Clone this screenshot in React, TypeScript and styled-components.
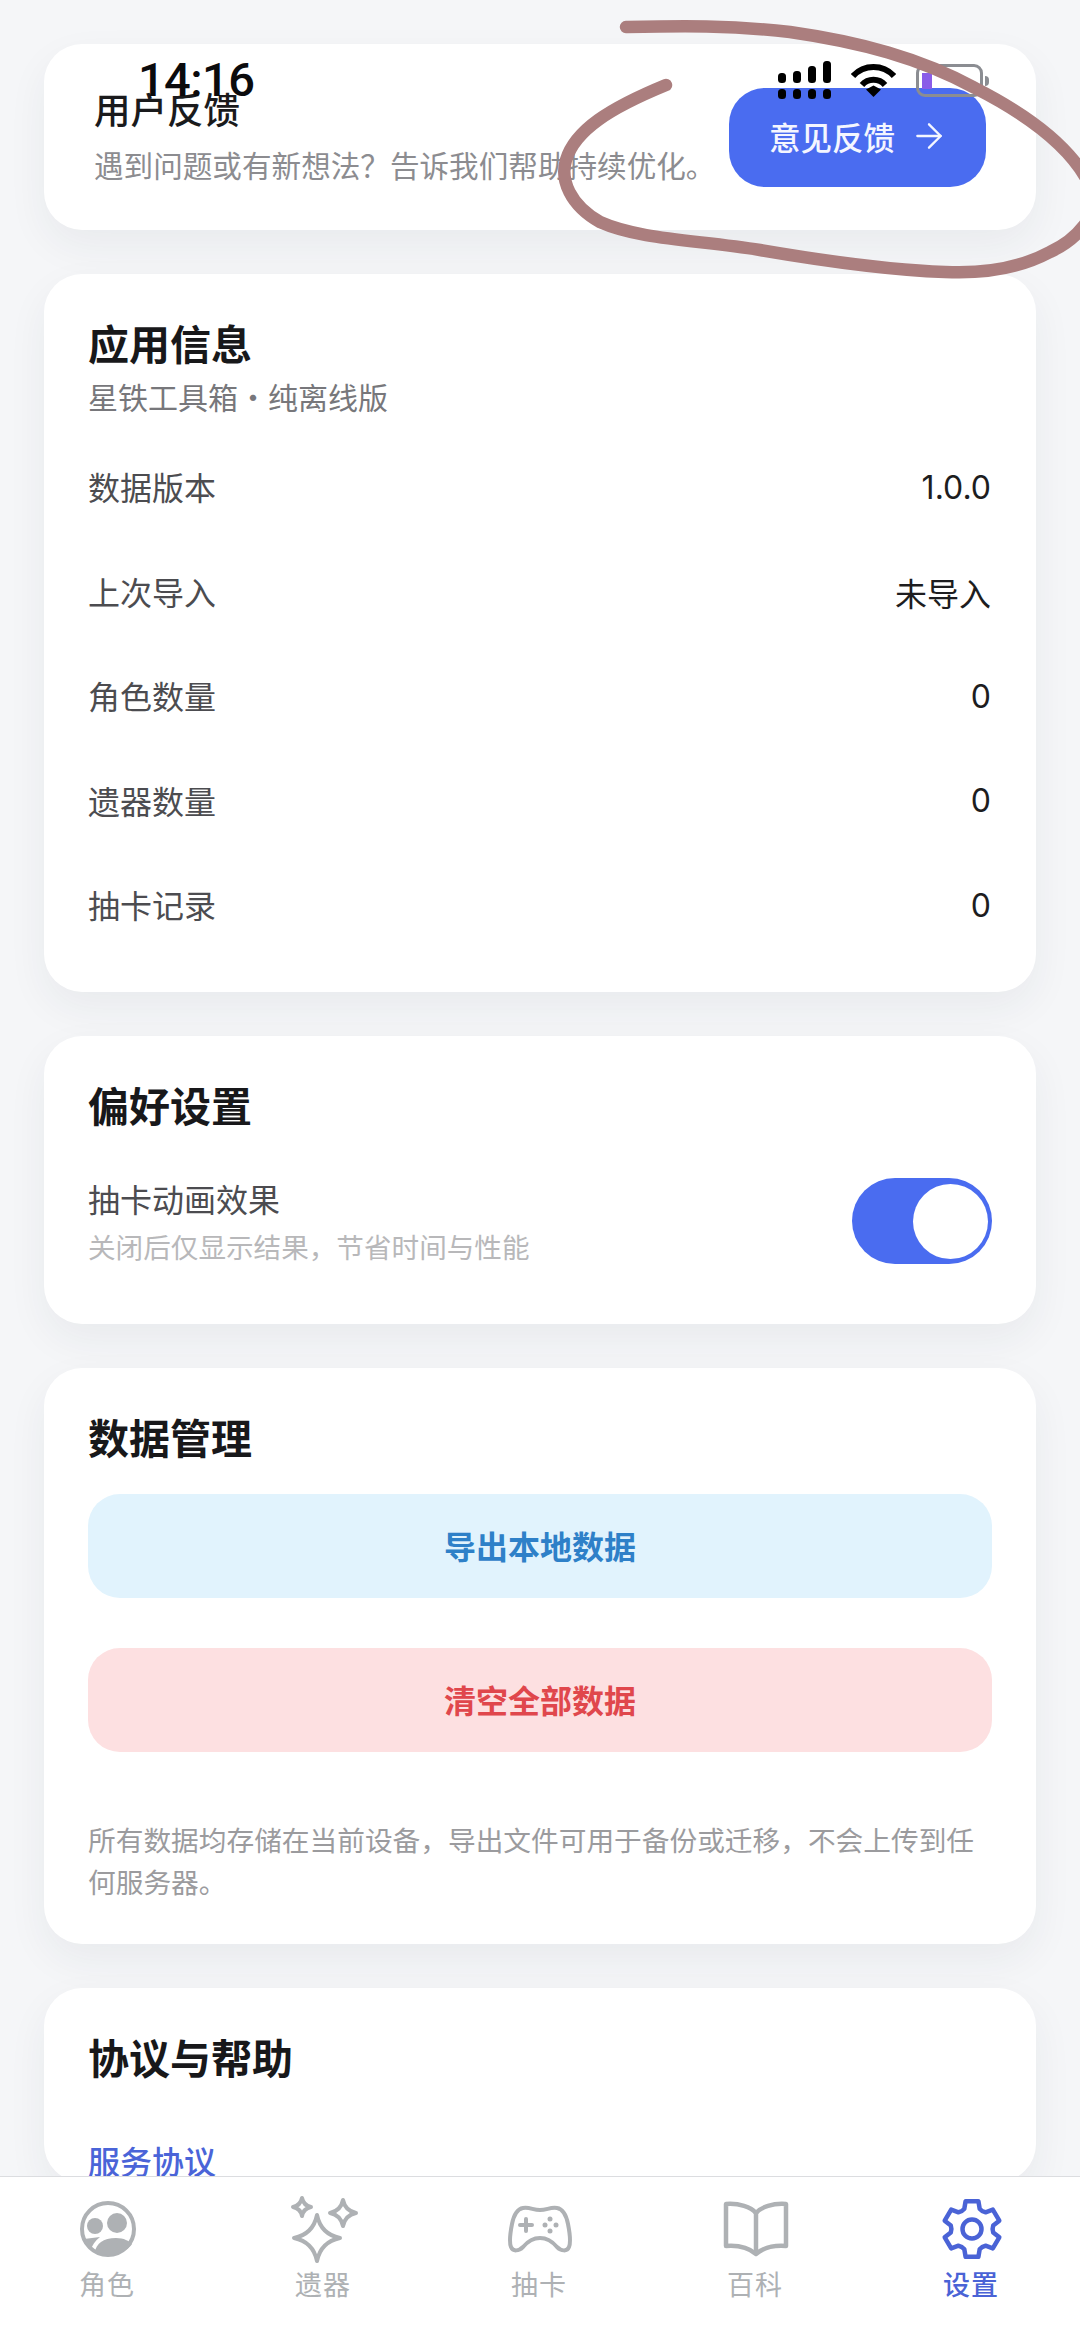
import React from 'react';
import styled, { createGlobalStyle } from 'styled-components';
import { ArrowRight } from 'lucide-react';

const GlobalStyle = createGlobalStyle`
	html,
	body {
		margin: 0;
		padding: 0;
		background: #f5f6f8;
	}
	* {
		box-sizing: border-box;
	}
`;

const Screen = styled.div`
	position: relative;
	display: flex;
	flex-direction: column;
	width: 1080px;
	height: 2341px;
	overflow: hidden;
	background: #f5f6f8;
	font-family: 'Noto Sans CJK SC', 'Noto Sans', sans-serif;
`;

const Scroll = styled.main`
	display: flex;
	flex-direction: column;
	gap: 44px;
	flex: 1;
	min-height: 0;
	overflow: hidden;
	padding: 44px 44px 0;
`;

const Card = styled.section`
	flex-shrink: 0;
	padding: 40px 44px 0;
	background: #fff;
	border-radius: 38px;
	box-shadow: 0 16px 40px rgba(40, 50, 70, 0.06);
`;

const FeedbackCard = styled(Card)`
	display: flex;
	align-items: center;
	justify-content: space-between;
	height: 186px;
	padding: 0 50px;
`;

const FeedbackTitle = styled.h2`
	margin: 0 0 16px;
	font-size: 36.5px;
	line-height: 40px;
	font-weight: 500;
	color: #1a1a1c;
`;

const FeedbackText = styled.p`
	margin: 0;
	font-size: 29.6px;
	line-height: 40px;
	white-space: nowrap;
	color: #8c8c90;
`;

const FeedbackButton = styled.button`
	display: flex;
	align-items: center;
	justify-content: center;
	gap: 14px;
	flex-shrink: 0;
	width: 257px;
	height: 99px;
	padding: 0 0 3px 3px;
	border: 0;
	border-radius: 36px;
	background: #4a6cf0;
	color: #f4f6ff;
	font-family: inherit;
	font-size: 31.5px;
	font-weight: 500;
`;

const CardTitle = styled.h2`
	margin: 0;
	font-size: 41px;
	line-height: 56px;
	font-weight: 700;
	color: #18181a;
`;

const Subtitle = styled.p`
	margin: 6px 0 18px;
	font-size: 30px;
	line-height: 40px;
	color: #77777b;
`;

const InfoList = styled.div`
	padding-bottom: 35px;
`;

const InfoRow = styled.div`
	display: flex;
	align-items: center;
	justify-content: space-between;
	height: 104.5px;
`;

const RowLabel = styled.span`
	font-size: 32px;
	color: #4c4c50;
`;

const RowValue = styled.span`
	padding: 2px 1px 0 0;
	font-family: 'Inter', 'Noto Sans CJK SC', sans-serif;
	font-size: 32px;
	color: #1d1d20;
`;

const PrefRow = styled.div`
	display: flex;
	align-items: center;
	justify-content: space-between;
	margin-top: 44px;
	padding-bottom: 59px;
`;

const PrefLabel = styled.div`
	font-size: 32px;
	line-height: 44px;
	color: #4c4c50;
`;

const PrefHint = styled.div`
	margin-top: 7px;
	font-size: 27.6px;
	line-height: 38px;
	color: #b8b8ba;
`;

const Toggle = styled.div`
	display: flex;
	align-items: center;
	justify-content: flex-end;
	width: 140px;
	height: 86px;
	margin-top: 2px;
	padding-right: 4px;
	border-radius: 43px;
	background: #4a6cf0;

	&::after {
		content: '';
		width: 75px;
		height: 75px;
		border-radius: 50%;
		background: #fff;
	}
`;

const ActionButton = styled.button<{ $danger?: boolean }>`
	display: block;
	width: 100%;
	height: 104px;
	margin-top: ${(p) => (p.$danger ? '50px' : '30px')};
	padding: 0 0 2px;
	border: 0;
	border-radius: 32px;
	background: ${(p) => (p.$danger ? '#fde0e1' : '#e1f3fd')};
	color: ${(p) => (p.$danger ? '#e0474c' : '#2e80c8')};
	font-family: inherit;
	font-size: 32px;
	font-weight: 700;
`;

const Note = styled.p`
	margin: 66px 0 0;
	padding-bottom: 42px;
	font-size: 27.7px;
	line-height: 42px;
	color: #9b9b9e;
`;

const HelpLink = styled.a`
	display: block;
	margin-top: 54px;
	font-size: 32px;
	line-height: 44px;
	font-weight: 500;
	color: #4a64d8;
`;

const TabBar = styled.nav`
	display: flex;
	flex-shrink: 0;
	height: 165px;
	padding-top: 17px;
	border-top: 1px solid #dcdde0;
	background: #fff;
	position: relative;
`;

const TabItem = styled.div<{ $active?: boolean }>`
	display: flex;
	flex: 1;
	flex-direction: column;
	align-items: center;
	color: ${(p) => (p.$active ? '#4a63d6' : '#aeb1b4')};

	svg {
		display: block;
	}
`;

const TabLabel = styled.span<{ $active?: boolean }>`
	margin-top: 2px;
	margin-right: 2px;
	font-size: 27px;
	line-height: 36px;
	font-weight: ${(p) => (p.$active ? 500 : 400)};
	letter-spacing: 1px;
`;

const StatusBar = styled.div`
	position: absolute;
	top: 61px;
	left: 138px;
	right: 97px;
	display: flex;
	align-items: center;
	justify-content: space-between;
	height: 38px;
`;

const Time = styled.span`
	font-family: 'Roboto', sans-serif;
	font-size: 47px;
	font-weight: 500;
	line-height: 38px;
	letter-spacing: -0.6px;
	color: #0b0b0d;
`;

const StatusIcons = styled.div`
	display: flex;
	align-items: center;
	gap: 20px;
`;

const Battery = styled.div`
	position: relative;
	width: 67px;
	height: 33px;
	padding: 6px 0 0 3px;
	border: 3px solid #8b8d92;
	border-radius: 9px;

	&::before {
		content: '';
		display: block;
		width: 10px;
		height: 16px;
		background: #8a5ce8;
	}

	&::after {
		content: '';
		position: absolute;
		top: 9px;
		right: -9px;
		width: 4px;
		height: 10px;
		border-radius: 0 4px 4px 0;
		background: #8b8d92;
	}
`;

const Scribble = styled.svg`
	position: absolute;
	top: 0;
	left: 0;
	pointer-events: none;
`;

const Signal = () => (
	<svg width="53" height="38" viewBox="0 0 53 38" fill="#000">
		<rect x="0" y="12" width="8" height="10" rx="3.5" />
		<rect x="15" y="10" width="8" height="12" rx="3.5" />
		<rect x="30" y="5" width="8" height="17" rx="3.5" />
		<rect x="45" y="0" width="8" height="22" rx="3.5" />
		<rect x="0" y="28" width="8" height="10" rx="3.5" />
		<rect x="15" y="28" width="8" height="10" rx="3.5" />
		<rect x="30" y="28" width="8" height="10" rx="3.5" />
		<rect x="45" y="28" width="8" height="10" rx="3.5" />
	</svg>
);

const Wifi = () => (
	<svg width="45" height="34" viewBox="0 0 45 34" fill="none" stroke="#000" strokeWidth="6">
		<path d="M2 13C13 1 32 1 43 13" />
		<path d="M11 22C17 15 28 15 34 22" />
		<path d="M15 26.5L22.5 22.5L30 26.5L22.5 34Z" fill="#000" stroke="none" />
	</svg>
);

const RolesIcon = () => (
	<svg width="70" height="70" viewBox="0 0 70 70" fill="currentColor">
		<circle cx="35" cy="35" r="26" fill="none" stroke="currentColor" strokeWidth="4" />
		<circle cx="44" cy="29" r="10" />
		<circle cx="22" cy="32" r="8" />
		<path d="M22 58C23 50 30 44 43 44C51 44 56 47 59 50C55 56 46 61 35 61C30 61 26 60 22 58Z" />
		<path d="M11 45L27 43C22 47 19 51 18 56C15 53 12 49 11 45Z" />
	</svg>
);

// four pointed star, r is the reach from the centre
const star = (cx: number, cy: number, r: number) => {
	const k = r * 0.17;
	return `M${cx} ${cy - r}Q${cx + k} ${cy - k} ${cx + r} ${cy}Q${cx + k} ${cy + k} ${cx} ${cy + r}Q${cx - k} ${cy + k} ${cx - r} ${cy}Q${cx - k} ${cy - k} ${cx} ${cy - r}Z`;
};

const RelicIcon = () => (
	<svg width="70" height="70" viewBox="0 0 70 70" fill="none" stroke="currentColor" strokeWidth="4" strokeLinejoin="round">
		<path d={star(28, 44, 23)} />
		<path d={star(13, 13, 9)} />
		<path d={star(54, 19, 13)} />
	</svg>
);

const GamepadIcon = () => (
	<svg width="70" height="70" viewBox="0 0 70 70" fill="none" stroke="currentColor" strokeWidth="4" strokeLinecap="round" strokeLinejoin="round">
		<path d="M18 14C25 13 28 16 35 16C42 16 45 13 52 14C58 15 61 20 63 30C65 40 66 48 64 53C62 58 56 57 52 53C47 47 42 44 35 44C28 44 23 47 18 53C14 57 8 58 6 53C4 48 5 40 7 30C9 20 12 15 18 14Z" />
		<path d="M21 25V37M15 31H27" />
		<g fill="currentColor" stroke="none">
			<circle cx="45" cy="25" r="2.5" />
			<circle cx="40" cy="31" r="2.5" />
			<circle cx="51" cy="31" r="2.5" />
			<circle cx="45" cy="37" r="2.5" />
		</g>
	</svg>
);

const BookIcon = () => (
	<svg width="70" height="70" viewBox="0 0 70 70" fill="none" stroke="currentColor" strokeWidth="4.5" strokeLinejoin="round">
		<path d="M35 19C30 13 18 9 5 10V52C18 51 28 54 35 60C42 54 52 51 65 52V10C52 9 40 13 35 19Z" />
		<path d="M35 19V60" />
	</svg>
);

// six lobed cog around (35,35)
const gearPath = () => {
	const at = (deg: number, r: number) => {
		const a = (deg * Math.PI) / 180;
		return `${(35 + r * Math.cos(a)).toFixed(1)} ${(35 + r * Math.sin(a)).toFixed(1)}`;
	};
	let d = '';
	for (let i = 0; i < 6; i++) {
		const a = -90 + i * 60;
		d += `${i === 0 ? 'M' : 'L'}${at(a - 21, 21.5)}L${at(a - 13, 28.5)}L${at(a + 13, 28.5)}L${at(a + 21, 21.5)}Q${at(a + 30, 20)} ${at(a + 39, 21.5)}`;
	}
	return `${d}Z`;
};

const GearIcon = () => (
	<svg width="70" height="70" viewBox="0 0 70 70" fill="none" stroke="currentColor" strokeWidth="4.5" strokeLinejoin="round">
		<path d={gearPath()} />
		<circle cx="35" cy="35" r="9.5" />
	</svg>
);

const infoRows = [
	['数据版本', '1.0.0'],
	['上次导入', '未导入'],
	['角色数量', '0'],
	['遗器数量', '0'],
	['抽卡记录', '0'],
];

const tabs = [
	{ label: '角色', icon: <RolesIcon /> },
	{ label: '遗器', icon: <RelicIcon /> },
	{ label: '抽卡', icon: <GamepadIcon /> },
	{ label: '百科', icon: <BookIcon /> },
	{ label: '设置', icon: <GearIcon />, active: true },
];

const App = () => {
	return (
		<Screen>
			<GlobalStyle />
			<Scroll>
				<FeedbackCard>
					<div>
						<FeedbackTitle>用户反馈</FeedbackTitle>
						<FeedbackText>{'遇到问题或有新想法\uFF1F告诉我们帮助持续优化。'}</FeedbackText>
					</div>
					<FeedbackButton>
						意见反馈
						<ArrowRight size={40} strokeWidth={1.4} />
					</FeedbackButton>
				</FeedbackCard>

				<Card>
					<CardTitle>应用信息</CardTitle>
					<Subtitle>星铁工具箱·纯离线版</Subtitle>
					<InfoList>
						{infoRows.map(([label, value]) => (
							<InfoRow key={label}>
								<RowLabel>{label}</RowLabel>
								<RowValue>{value}</RowValue>
							</InfoRow>
						))}
					</InfoList>
				</Card>

				<Card>
					<CardTitle>偏好设置</CardTitle>
					<PrefRow>
						<div>
							<PrefLabel>抽卡动画效果</PrefLabel>
							<PrefHint>{'关闭后仅显示结果\uFF0C节省时间与性能'}</PrefHint>
						</div>
						<Toggle />
					</PrefRow>
				</Card>

				<Card>
					<CardTitle>数据管理</CardTitle>
					<ActionButton>导出本地数据</ActionButton>
					<ActionButton $danger>清空全部数据</ActionButton>
					<Note>{'所有数据均存储在当前设备\uFF0C导出文件可用于备份或迁移\uFF0C不会上传到任何服务器。'}</Note>
				</Card>

				<Card>
					<CardTitle>协议与帮助</CardTitle>
					<HelpLink>服务协议</HelpLink>
				</Card>
			</Scroll>

			<TabBar>
				{tabs.map((tab) => (
					<TabItem key={tab.label} $active={tab.active}>
						{tab.icon}
						<TabLabel $active={tab.active}>{tab.label}</TabLabel>
					</TabItem>
				))}
			</TabBar>

			<StatusBar>
				<Time>14:16</Time>
				<StatusIcons>
					<Signal />
					<Wifi />
					<Battery />
				</StatusIcons>
			</StatusBar>

			<Scribble width="1080" height="300" viewBox="0 0 1080 300" fill="none">
				<path
					d="M626 27C680 26 730 25 790 32C860 42 920 58 975 88C1030 116 1075 150 1092 190C1100 215 1076 240 1050 252C1020 268 985 274 945 272C890 270 830 262 760 250C700 240 640 240 600 222C570 205 560 180 566 160C575 130 610 108 666 85"
					stroke="#ab7e7e"
					strokeWidth="12.5"
					strokeLinecap="round"
					strokeLinejoin="round"
				/>
			</Scribble>
		</Screen>
	);
};

export default App;
